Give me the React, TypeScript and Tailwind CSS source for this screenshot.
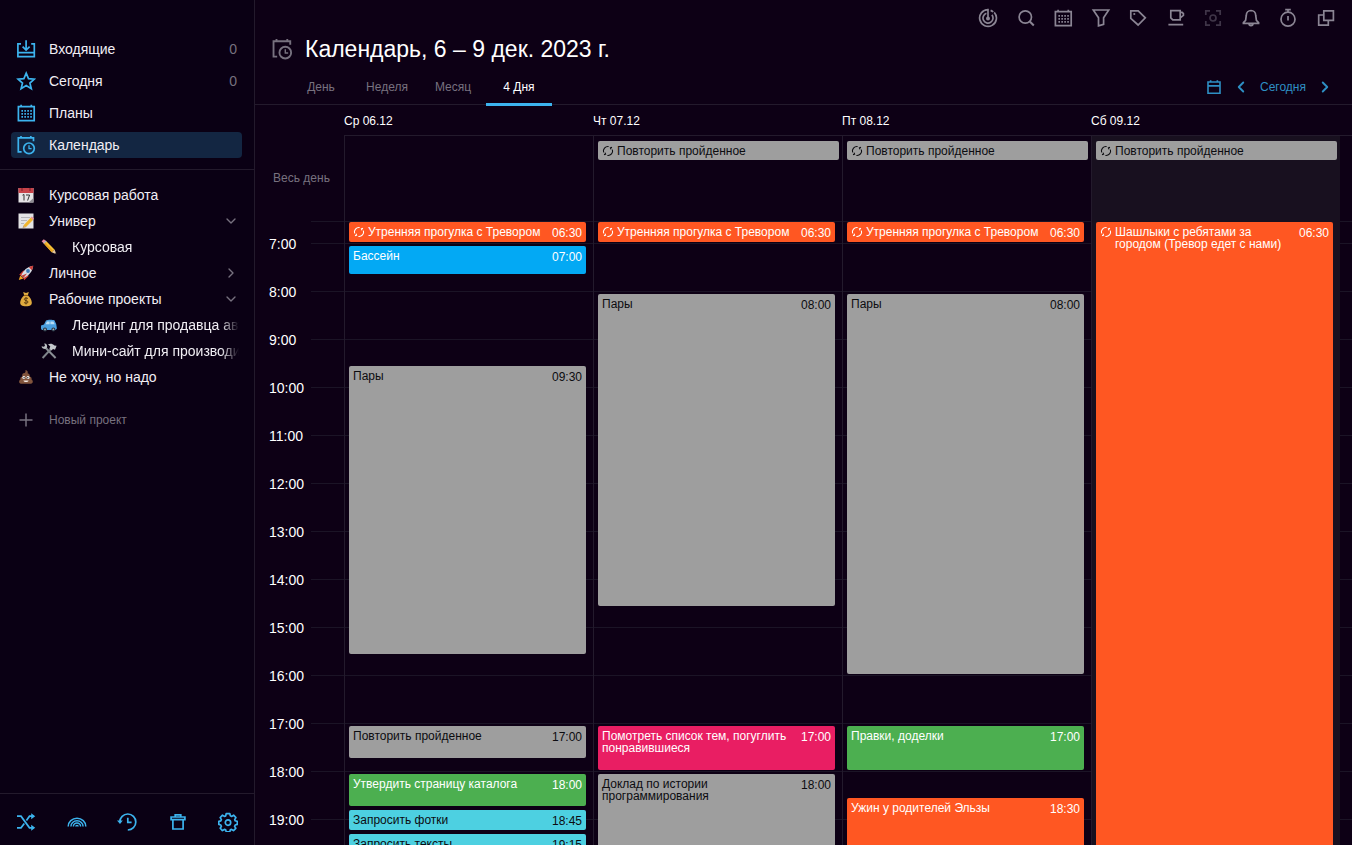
import React from "react";
import { ChevronDown, ChevronLeft, ChevronRight } from "lucide-react";

interface IconProps {
  className?: string;
  children?: React.ReactNode;
}

const Icon = ({ className = "size-5", children }: IconProps) => (
  <svg
    viewBox="0 0 20 20"
    fill="none"
    stroke="currentColor"
    strokeWidth="1.7"
    aria-hidden="true"
    className={`shrink-0 ${className}`}
  >
    {children}
  </svg>
);

const InboxIcon = () => (
  <Icon>
    <path d="M5 4.8H1.9v12.8h16.4V4.8h-3.1M1.9 13.6h16.4M10.1 1.2v9.6M6.6 7.6l3.5 3.4 3.5-3.4" />
  </Icon>
);

const StarIcon = () => (
  <Icon>
    <path d="M10.2 2.2l2.3 5.4 5.8.5-4.4 3.9 1.4 5.7-5.1-3.1-5.1 3.1L6.5 12 2.1 8.1l5.8-.5z" />
  </Icon>
);

const PlansIcon = () => (
  <Icon>
    <path d="M2.4 3.7h15.8v13.9H2.4zM5.1 1.8v2M15.3 1.8v2" />
    <path
      d="M5.4 7.9h10.5M5.4 10.9h10.5M5.4 13.9h10.5"
      strokeDasharray="1.6 1.35"
      strokeWidth="1.6"
    />
  </Icon>
);

const CalendarClockIcon = ({ className }: IconProps) => (
  <Icon className={className}>
    <path d="M5.6 16.9H2.3V2.9h15.2v3.3M5 1v2M14.8 1v2" />
    <circle cx="13" cy="13.3" r="5.3" />
    <path d="M13 10.2v3.4h2.6" strokeWidth="1.3" />
  </Icon>
);

const RadarIcon = () => (
  <Icon>
    <path d="M10 .8v9.4M10 1.6A8.4 8.4 0 1 0 16.2 4.3M8.4 5.3A5 5 0 1 0 13.9 6.9M12.6 2.4c1 .4 1.9.9 2.6 1.6" />
    <circle cx="10" cy="10.4" r="2" fill="currentColor" stroke="none" />
  </Icon>
);

const SearchIcon = () => (
  <Icon>
    <circle cx="9.3" cy="9" r="6.2" />
    <path d="M13.8 13.5l4 4" strokeWidth="2" />
  </Icon>
);

const FilterIcon = () => (
  <Icon>
    <path d="M2.3 2h15.4l-5.1 7.8v6.6l-5.1 1.5V9.8z" />
  </Icon>
);

const TagIcon = () => (
  <Icon>
    <path d="M2.8 2.8h7.4l7.1 7-7.2 7.2-7.3-6.6z" />
    <path d="M5.4 6h1.8" strokeWidth="1.8" />
  </Icon>
);

const CupIcon = () => (
  <Icon>
    <path d="M4.8 2.6h9.4v9.2H6.8l-2-2zM14.2 4.4h2l1.2 1.3v1.6l-3.2 2.5M2.4 16.6h14.8" />
  </Icon>
);

const FocusIcon = () => (
  <Icon>
    <path d="M7 2.8H2.8V7M13 2.8h4.2V7M2.8 13v4.2H7M17.2 13v4.2H13" />
    <circle cx="10" cy="10" r="3" />
  </Icon>
);

const BellIcon = () => (
  <Icon>
    <path d="M2.4 15.4h15.2v-.8l-2.2-2.2-.7-5.2A4.8 4.8 0 0 0 10 2.5a4.8 4.8 0 0 0-4.7 4.7l-.7 5.2-2.2 2.2zM8 15.6a2 2 0 0 0 4 0" />
  </Icon>
);

const StopwatchIcon = () => (
  <Icon>
    <circle cx="10" cy="11.2" r="7" />
    <path d="M7.2 1.7h5.6M10 1.7v2.5M10 8v4.4" />
  </Icon>
);

const WindowsIcon = () => (
  <Icon>
    <path d="M7.8 2.8h9.6v9.6H7.8zM7.8 7H2.7v10.2h9.6v-4.8" />
  </Icon>
);

const ShuffleIcon = () => (
  <Icon>
    <path d="M1 4.2h4l8.5 11.6h4.2M1 15.8h4l3.3-4.4M10.4 8.6l3.1-4.4h4.2" />
    <path
      d="M15.2 1.2l4 3-4 3zM15.2 12.8l4 3-4 3z"
      fill="currentColor"
      stroke="none"
    />
  </Icon>
);

const RainbowIcon = () => (
  <Icon>
    <path
      d="M1.2 14.4a8.8 8.2 0 0 1 17.6 0M3.9 14.4a6.1 5.6 0 0 1 12.2 0M6.4 14.4a3.6 3.3 0 0 1 7.2 0M8.9 14.4a1.1 1 0 0 1 2.2 0"
      strokeWidth="1.5"
    />
  </Icon>
);

const HistoryIcon = () => (
  <Icon>
    <path d="M2.8 10a8 8 0 1 1 8 8M10.8 5.8v4.6h3.8" />
    <path d="M0 8.4h5.8L3 12z" fill="currentColor" stroke="none" />
  </Icon>
);

const TrashIcon = () => (
  <Icon>
    <path d="M4.9 8.4v8.6h10.2V8.4M3.1 5h13.8v2.6H3.1zM7.2 4.8V2.9h5.6v1.9" />
  </Icon>
);

const GearIcon = () => (
  <Icon>
    <path
      d="M8.2 1.6h3.6l.5 2.2 1.3.6 2-1.2 2.3 2.4-1.2 2 .5 1.2 2.1.6v3l-2.1.6-.6 1.4 1.2 1.9-2.3 2.3-2-1.2-1.2.5-.5 2H8.2l-.5-2-1.3-.5-2 1.2-2.2-2.4 1.2-1.9-.6-1.3-2-.6v-3l2-.5.6-1.3-1.2-2 2.3-2.4 1.9 1.2 1.3-.5z"
      strokeLinejoin="round"
    />
    <circle cx="10" cy="10.6" r="2.7" />
  </Icon>
);

const SmallCalendarIcon = () => (
  <Icon className="size-4">
    <path
      d="M2.5 3.8h15v14h-15zM2.5 8.6h15M5.8 1.5v2.3M14.2 1.5v2.3"
      strokeWidth="2"
    />
  </Icon>
);

const RepeatIcon = () => (
  <svg
    viewBox="0 0 12 12"
    fill="none"
    stroke="currentColor"
    strokeWidth="1.1"
    aria-hidden="true"
    className="size-3 shrink-0"
  >
    <path d="M6.6 1.5A4.6 4.6 0 0 0 1.6 7.4M5.4 10.5A4.6 4.6 0 0 0 10.4 4.6" />
    <path d="M2 9.6l1.6-.4L3 7.6M10 2.4l-1.6.4.6 1.6" />
  </svg>
);

const Picture = ({ children }: IconProps) => (
  <svg viewBox="0 0 16 16" aria-hidden="true" className="size-4 shrink-0">
    {children}
  </svg>
);

const DatePicture = () => (
  <Picture>
    <path d="M.5 1h15v14.500H.5z" fill="#e6e4e6" />
    <path d="M.5 1h15v5H.5z" fill="#c8434a" />
    <path d="M4 1v3M12 1v3" stroke="#7b2028" />
    <path d="M4.5 8.2L6 7.500v6M8 8h3.600l-2 5.500" stroke="#333" fill="none" />
    <path d="M15.500 11v4.500h-5z" fill="#8f8d93" />
  </Picture>
);

const MemoPicture = () => (
  <Picture>
    <path d="M.5.5h15v15H.5z" fill="#e3e3e4" />
    <path d="M3 4.500h9M3 7.500h6M3 10.500h3" stroke="#a8a8ad" strokeWidth=".8" />
    <path d="M5.4 12.500l7.400-8 2.400 2.200-7.400 7.600z" fill="#f1b52d" />
    <path d="M12.800 4.500l1-1 2.200 2.100-.8 1.100z" fill="#e9899b" />
    <path d="M5.400 12.500l-.8 2.600 3.200-.8z" fill="#c79f65" />
  </Picture>
);

const PencilPicture = () => (
  <Picture>
    <path d="M2.8 4.6l2.6-2.4 8.3 8.6-3 2.5z" fill="#f7c136" />
    <path d="M4.1 3.4l8.2 8.6-1.6 1.3-7.9-8.7z" fill="#e5a21e" />
    <path d="M.6 2.2L2.8.2l2.6 2-2.6 2.4z" fill="#e8899c" />
    <path d="M2.2 3.9l2.6-2.3.8.8L3 4.8z" fill="#b5bcc4" />
    <path d="M13.7 10.8l1.6 4.4-4.6-1.9z" fill="#e6c79b" />
    <path d="M14.8 13.7l.5 1.5-1.6-.6z" fill="#333" />
  </Picture>
);

const RocketPicture = () => (
  <Picture>
    <path d="M.8 15l1.4-4.4 3.2 2.8z" fill="#f0a522" />
    <path
      d="M1.2 9.8l4.2-4.2 2.4 1L4 11.2zM6.2 15.2l4.4-4.2-1.3-2.4-4.2 4.2z"
      fill="#d43d33"
    />
    <path
      d="M3.2 10.8C5.4 5.4 9 1.8 15.2.8 14.4 6.8 10.8 10.8 5.4 13z"
      fill="#d9dde4"
    />
    <path
      d="M15.2.8c-1.6.2-3 .7-4.3 1.4l3 3c.7-1.4 1.2-2.8 1.3-4.4z"
      fill="#c93b36"
    />
    <circle cx="10" cy="6" r="1.9" fill="#3b78b5" />
    <path d="M3.2 10.8l2.2 2.2L9 8.4z" fill="#c2453c" />
  </Picture>
);

const MoneyPicture = () => (
  <Picture>
    <path d="M5.2 1l2.8.9 2.8-.9-1 3.4H6.2z" fill="#e2af43" />
    <path
      d="M6.2 4.2h3.6c2.4 2 4 4.8 4 7.4 0 2.5-1.4 3.7-5.8 3.7s-5.8-1.2-5.8-3.7c0-2.6 1.6-5.4 4-7.4z"
      fill="#e0aa3e"
    />
    <path d="M6 4.4h4" stroke="#8b5b17" />
    <path
      d="M10 7.6c-.8-.8-3.7-.9-3.7.7 0 1.7 3.7.9 3.7 2.7 0 1.6-3 1.5-4 .5M8 6.2v7.2"
      stroke="#5c3d10"
      fill="none"
    />
  </Picture>
);

const CarPicture = () => (
  <Picture>
    <path
      d="M0 8.6l3-1.2 2-4c1.6-.9 6.4-1 8.4-.1l1.8 3.8.7 4.4-1.2 1.5H.8L0 11.6z"
      fill="#4b9fe0"
    />
    <path d="M4.6 7.2L6 4.4h2.6v2.8zM9.4 4.4h3l1.3 2.8H9.4z" fill="#b8dcf5" />
    <circle cx="4" cy="12.4" r="2" fill="#263543" />
    <circle cx="12.4" cy="12.4" r="2" fill="#263543" />
    <circle cx="4" cy="12.4" r=".9" fill="#a9b2ba" />
    <circle cx="12.4" cy="12.4" r=".9" fill="#a9b2ba" />
  </Picture>
);

const ToolsPicture = () => (
  <Picture>
    <path d="M14.6 15L3.8 4" stroke="#8b9096" strokeWidth="2" />
    <path
      d="M.6 3.2L3 3.800 4 2.400 3.200.4C5.600.2 6.600 2 6 4.400L4.200 6C2 6 .8 5 .6 3.200z"
      fill="#b9bdc1"
    />
    <path d="M1.6 15l9-9.6" stroke="#7f858b" strokeWidth="2" />
    <path
      d="M7 1.2c2.6-1 4.6-.6 6.4 1.2l2.2.4-1.6 4-2-.8-1.6 1.4-2-2 .9-1.8z"
      fill="#c4c8cc"
    />
  </Picture>
);

const PoopPicture = () => (
  <Picture>
    <path
      d="M7.4 1c2.2.5 2.8 1.9 2.2 3.2 1.8.3 2.6 1.7 2 3.2 1.6.3 2.4 1.6 1.9 3 1.7.7 2 3.9-.6 4.4H3c-2.5-.5-2.3-3.7-.5-4.4-.5-1.4.3-2.7 1.8-3C3.8 5 5 4.2 6.6 4c1-.7 1.200-1.800.8-3z"
      fill="#81543c"
    />
    <circle cx="5.9" cy="8.6" r="1.5" fill="#fff" />
    <circle cx="10" cy="8.6" r="1.5" fill="#fff" />
    <circle cx="6.1" cy="8.7" r=".7" fill="#222" />
    <circle cx="9.8" cy="8.7" r=".7" fill="#222" />
    <path d="M5.4 11.4h5.2c-.6 2-4.5 2-5.2 0z" fill="#f3e9e3" />
  </Picture>
);

const menu = [
  { label: "Входящие", icon: <InboxIcon />, count: 0 },
  { label: "Сегодня", icon: <StarIcon />, count: 0 },
  { label: "Планы", icon: <PlansIcon /> },
  { label: "Календарь", icon: <CalendarClockIcon />, active: true },
];

interface Project {
  label: string;
  icon: React.ReactNode;
  nested?: boolean;
  state?: "open" | "closed";
}

const projects: Project[] = [
  { label: "Курсовая работа", icon: <DatePicture /> },
  { label: "Универ", icon: <MemoPicture />, state: "open" },
  { label: "Курсовая", icon: <PencilPicture />, nested: true },
  { label: "Личное", icon: <RocketPicture />, state: "closed" },
  { label: "Рабочие проекты", icon: <MoneyPicture />, state: "open" },
  { label: "Лендинг для продавца авт", icon: <CarPicture />, nested: true },
  { label: "Мини-сайт для производи", icon: <ToolsPicture />, nested: true },
  { label: "Не хочу, но надо", icon: <PoopPicture /> },
];

const footer = [
  { label: "Перемешать", icon: <ShuffleIcon /> },
  { label: "Радуга", icon: <RainbowIcon /> },
  { label: "История", icon: <HistoryIcon /> },
  { label: "Корзина", icon: <TrashIcon /> },
  { label: "Настройки", icon: <GearIcon /> },
];

const toolbar = [
  { label: "Обзор", icon: <RadarIcon /> },
  { label: "Поиск", icon: <SearchIcon /> },
  { label: "Планы", icon: <PlansIcon /> },
  { label: "Фильтр", icon: <FilterIcon /> },
  { label: "Метки", icon: <TagIcon /> },
  { label: "Перерыв", icon: <CupIcon /> },
  { label: "Фокус", icon: <FocusIcon />, disabled: true },
  { label: "Уведомления", icon: <BellIcon /> },
  { label: "Таймер", icon: <StopwatchIcon /> },
  { label: "Окна", icon: <WindowsIcon /> },
];

const tabs = ["День", "Неделя", "Месяц", "4 Дня"];

const colors = {
  gray: "bg-[#9e9e9e] text-[#0c0c10]",
  orange: "bg-[#ff5722] text-white",
  blue: "bg-[#03a9f4] text-white",
  green: "bg-[#4caf50] text-white",
  cyan: "bg-[#4dd0e1] text-[#0c0c10]",
  pink: "bg-[#e91e63] text-white",
};

interface CalendarEvent {
  title: string;
  start: string;
  duration: number;
  color: keyof typeof colors;
  repeat?: boolean;
}

interface Day {
  label: string;
  allDay?: string;
  weekend?: boolean;
  events: CalendarEvent[];
}

const walk: CalendarEvent = {
  title: "Утренняя прогулка с Тревором",
  start: "06:30",
  duration: 25,
  color: "orange",
  repeat: true,
};

const days: Day[] = [
  {
    label: "Ср 06.12",
    events: [
      walk,
      { title: "Бассейн", start: "07:00", duration: 35, color: "blue" },
      { title: "Пары", start: "09:30", duration: 360, color: "gray" },
      { title: "Повторить пройденное", start: "17:00", duration: 40, color: "gray" },
      { title: "Утвердить страницу каталога", start: "18:00", duration: 40, color: "green" },
      { title: "Запросить фотки", start: "18:45", duration: 25, color: "cyan" },
      { title: "Запросить тексты", start: "19:15", duration: 25, color: "cyan" },
    ],
  },
  {
    label: "Чт 07.12",
    allDay: "Повторить пройденное",
    events: [
      walk,
      { title: "Пары", start: "08:00", duration: 390, color: "gray" },
      { title: "Помотреть список тем, погуглить понравившиеся", start: "17:00", duration: 55, color: "pink" },
      { title: "Доклад по истории программирования", start: "18:00", duration: 120, color: "gray" },
    ],
  },
  {
    label: "Пт 08.12",
    allDay: "Повторить пройденное",
    events: [
      walk,
      { title: "Пары", start: "08:00", duration: 475, color: "gray" },
      { title: "Правки, доделки", start: "17:00", duration: 55, color: "green" },
      { title: "Ужин у родителей Эльзы", start: "18:30", duration: 120, color: "orange" },
    ],
  },
  {
    label: "Сб 09.12",
    allDay: "Повторить пройденное",
    weekend: true,
    events: [
      {
        title: "Шашлыки с ребятами за городом (Тревор едет с нами)",
        start: "06:30",
        duration: 900,
        color: "orange",
        repeat: true,
      },
    ],
  },
];

const hours = Array.from({ length: 16 }, (_, i) => i + 7);

const HOUR_HEIGHT = 48;
const FIRST_MINUTE = 390;

const offsetOf = (time: string) => {
  const [h, m] = time.split(":").map(Number);
  return Math.round(((h * 60 + m - FIRST_MINUTE) * HOUR_HEIGHT) / 60);
};

const EventCard = ({ event }: { event: CalendarEvent }) => (
  <button
    type="button"
    className={`absolute left-1 right-[7px] flex items-start gap-[3px] overflow-hidden rounded-xs px-1 pt-1 text-left text-xs leading-3 ${colors[event.color]}`}
    style={{
      top: offsetOf(event.start),
      height: Math.round((event.duration * HOUR_HEIGHT) / 60),
    }}
  >
    {event.repeat && <RepeatIcon />}
    <span className="min-w-0 flex-1">{event.title}</span>
    <span className="leading-[14px]">{event.start}</span>
  </button>
);

const Sidebar = () => (
  <aside className="flex w-[255px] shrink-0 flex-col border-r border-[#231a2c] bg-[#0a0014] text-sm text-[#f1eef4]">
    <nav className="flex flex-col gap-1.5 border-b border-[#231a2c] pt-9 pr-3 pb-[11px] pl-[11px]">
      {menu.map((item) => (
        <a
          key={item.label}
          href="#"
          className={`flex h-[26px] items-center rounded-sm px-[5px] ${item.active ? "bg-[#132642]" : ""}`}
        >
          <span className="text-[#3cb3ee]">{item.icon}</span>
          <span className="ml-[13px] flex-1">{item.label}</span>
          {item.count !== undefined && (
            <span className="text-[#77717f]">{item.count}</span>
          )}
        </a>
      ))}
    </nav>

    <nav className="flex flex-1 flex-col pt-3 pr-[15px] pl-[18px]">
      {projects.map((project) => (
        <a
          key={project.label}
          href="#"
          className={`flex h-[26px] items-center ${project.nested ? "pl-[23px]" : ""}`}
        >
          {project.icon}
          <span
            className={`flex-1 overflow-hidden pl-[15px] whitespace-nowrap ${project.nested ? "mask-r-from-90%" : ""}`}
          >
            {project.label}
          </span>
          {project.state === "open" && (
            <ChevronDown className="size-4 text-[#77717f]" />
          )}
          {project.state === "closed" && (
            <ChevronRight className="size-4 text-[#77717f]" />
          )}
        </a>
      ))}
      <button
        type="button"
        className="mt-3.5 flex h-8 items-center text-xs text-[#77717f]"
      >
        <svg
          viewBox="0 0 16 16"
          className="size-4"
          stroke="currentColor"
          strokeWidth="1.5"
        >
          <path d="M8 1.5v13M1.5 8h13" />
        </svg>
        <span className="ml-[15px]">Новый проект</span>
      </button>
    </nav>

    <div className="flex h-[52px] items-center justify-between border-t border-[#231a2c] px-4 pt-1 text-[#3cb3ee]">
      {footer.map((item) => (
        <button key={item.label} type="button" aria-label={item.label}>
          {item.icon}
        </button>
      ))}
    </div>
  </aside>
);

const Header = () => (
  <header>
    <div className="flex h-9 items-center justify-end pr-4">
      <div className="flex w-[358px] justify-between text-[#8b8594]">
        {toolbar.map((item) => (
          <button
            key={item.label}
            type="button"
            aria-label={item.label}
            className={item.disabled ? "opacity-40" : ""}
          >
            {item.icon}
          </button>
        ))}
      </div>
    </div>
    <div className="flex h-[26px] items-center pl-4">
      <CalendarClockIcon className="size-[22px] text-[#77717f]" />
      <h1 className="ml-3 text-[23px] leading-[26px] text-white">
        Календарь, 6 – 9 дек. 2023 г.
      </h1>
    </div>
    <div className="flex h-[43px] items-stretch border-b border-[#231a2c] pr-[18px] pl-[33px] text-xs">
      {tabs.map((tab) => (
        <button
          key={tab}
          type="button"
          className={`relative w-[66px] pt-2 ${tab === "4 Дня" ? "text-white" : "text-[#77717f]"}`}
        >
          {tab}
          {tab === "4 Дня" && (
            <span className="absolute inset-x-0 -bottom-0.5 h-[3px] bg-[#3cb3ee]" />
          )}
        </button>
      ))}
      <div className="ml-auto flex items-center pt-2 text-[#2e8fc4]">
        <button type="button" aria-label="Выбрать дату">
          <SmallCalendarIcon />
        </button>
        <button type="button" aria-label="Назад" className="ml-2.5">
          <ChevronLeft className="size-[18px]" strokeWidth={2.5} />
        </button>
        <button type="button" className="mx-2.5">
          Сегодня
        </button>
        <button type="button" aria-label="Вперёд">
          <ChevronRight className="size-[18px]" strokeWidth={2.5} />
        </button>
      </div>
    </div>
  </header>
);

const Calendar = () => (
  <section className="flex min-h-0 flex-1 flex-col overflow-hidden">
    <div className="flex shrink-0 pr-3 pl-[89px] text-xs text-white">
      {days.map((day) => (
        <div key={day.label} className="h-[30px] flex-1 pt-px leading-[30px]">
          {day.label}
        </div>
      ))}
    </div>

    <div className="flex h-[86px] shrink-0">
      <div className="flex w-[89px] items-center justify-center pl-1 text-xs text-[#77717f]">
        Весь день
      </div>
      <div className="flex flex-1 border-t border-[#231a2c] pr-3">
        {days.map((day) => (
          <div
            key={day.label}
            className={`flex-1 border-l border-[#231a2c] pt-[5px] pr-[3px] pl-1 ${day.weekend ? "bg-[#18101f]" : ""}`}
          >
            {day.allDay && (
              <button
                type="button"
                className="flex h-[19px] w-full items-center gap-[3px] rounded-xs bg-[#9e9e9e] px-1 text-xs leading-3 text-[#0c0c10]"
              >
                <RepeatIcon />
                {day.allDay}
              </button>
            )}
          </div>
        ))}
      </div>
    </div>

    <div className="relative min-h-0 flex-1">
      <div className="ml-14 h-[22px] border-t border-[#1b1426]" />
      {hours.map((hour) => (
        <div key={hour} className="flex h-12">
          <div className="-mt-[7px] w-14 shrink-0 pl-3.5 text-sm leading-4 text-white">
            {hour}:00
          </div>
          <div className="flex-1 border-t border-[#1b1426]" />
        </div>
      ))}
      <div className="absolute inset-y-0 right-3 left-[89px] flex">
        {days.map((day) => (
          <div
            key={day.label}
            className={`flex-1 border-l border-[#231a2c] pt-px ${day.weekend ? "bg-[#18101f]" : ""}`}
          >
            <div className="relative">
              {day.events.map((event) => (
                <EventCard key={event.start} event={event} />
              ))}
            </div>
          </div>
        ))}
      </div>
    </div>
  </section>
);

const App = () => {
  return (
    <div className="flex h-screen overflow-hidden bg-[#0d0015] font-['Liberation_Sans',Arial,sans-serif]">
      <Sidebar />
      <main className="flex min-w-0 flex-1 flex-col">
        <Header />
        <Calendar />
      </main>
    </div>
  );
};

export default App;
